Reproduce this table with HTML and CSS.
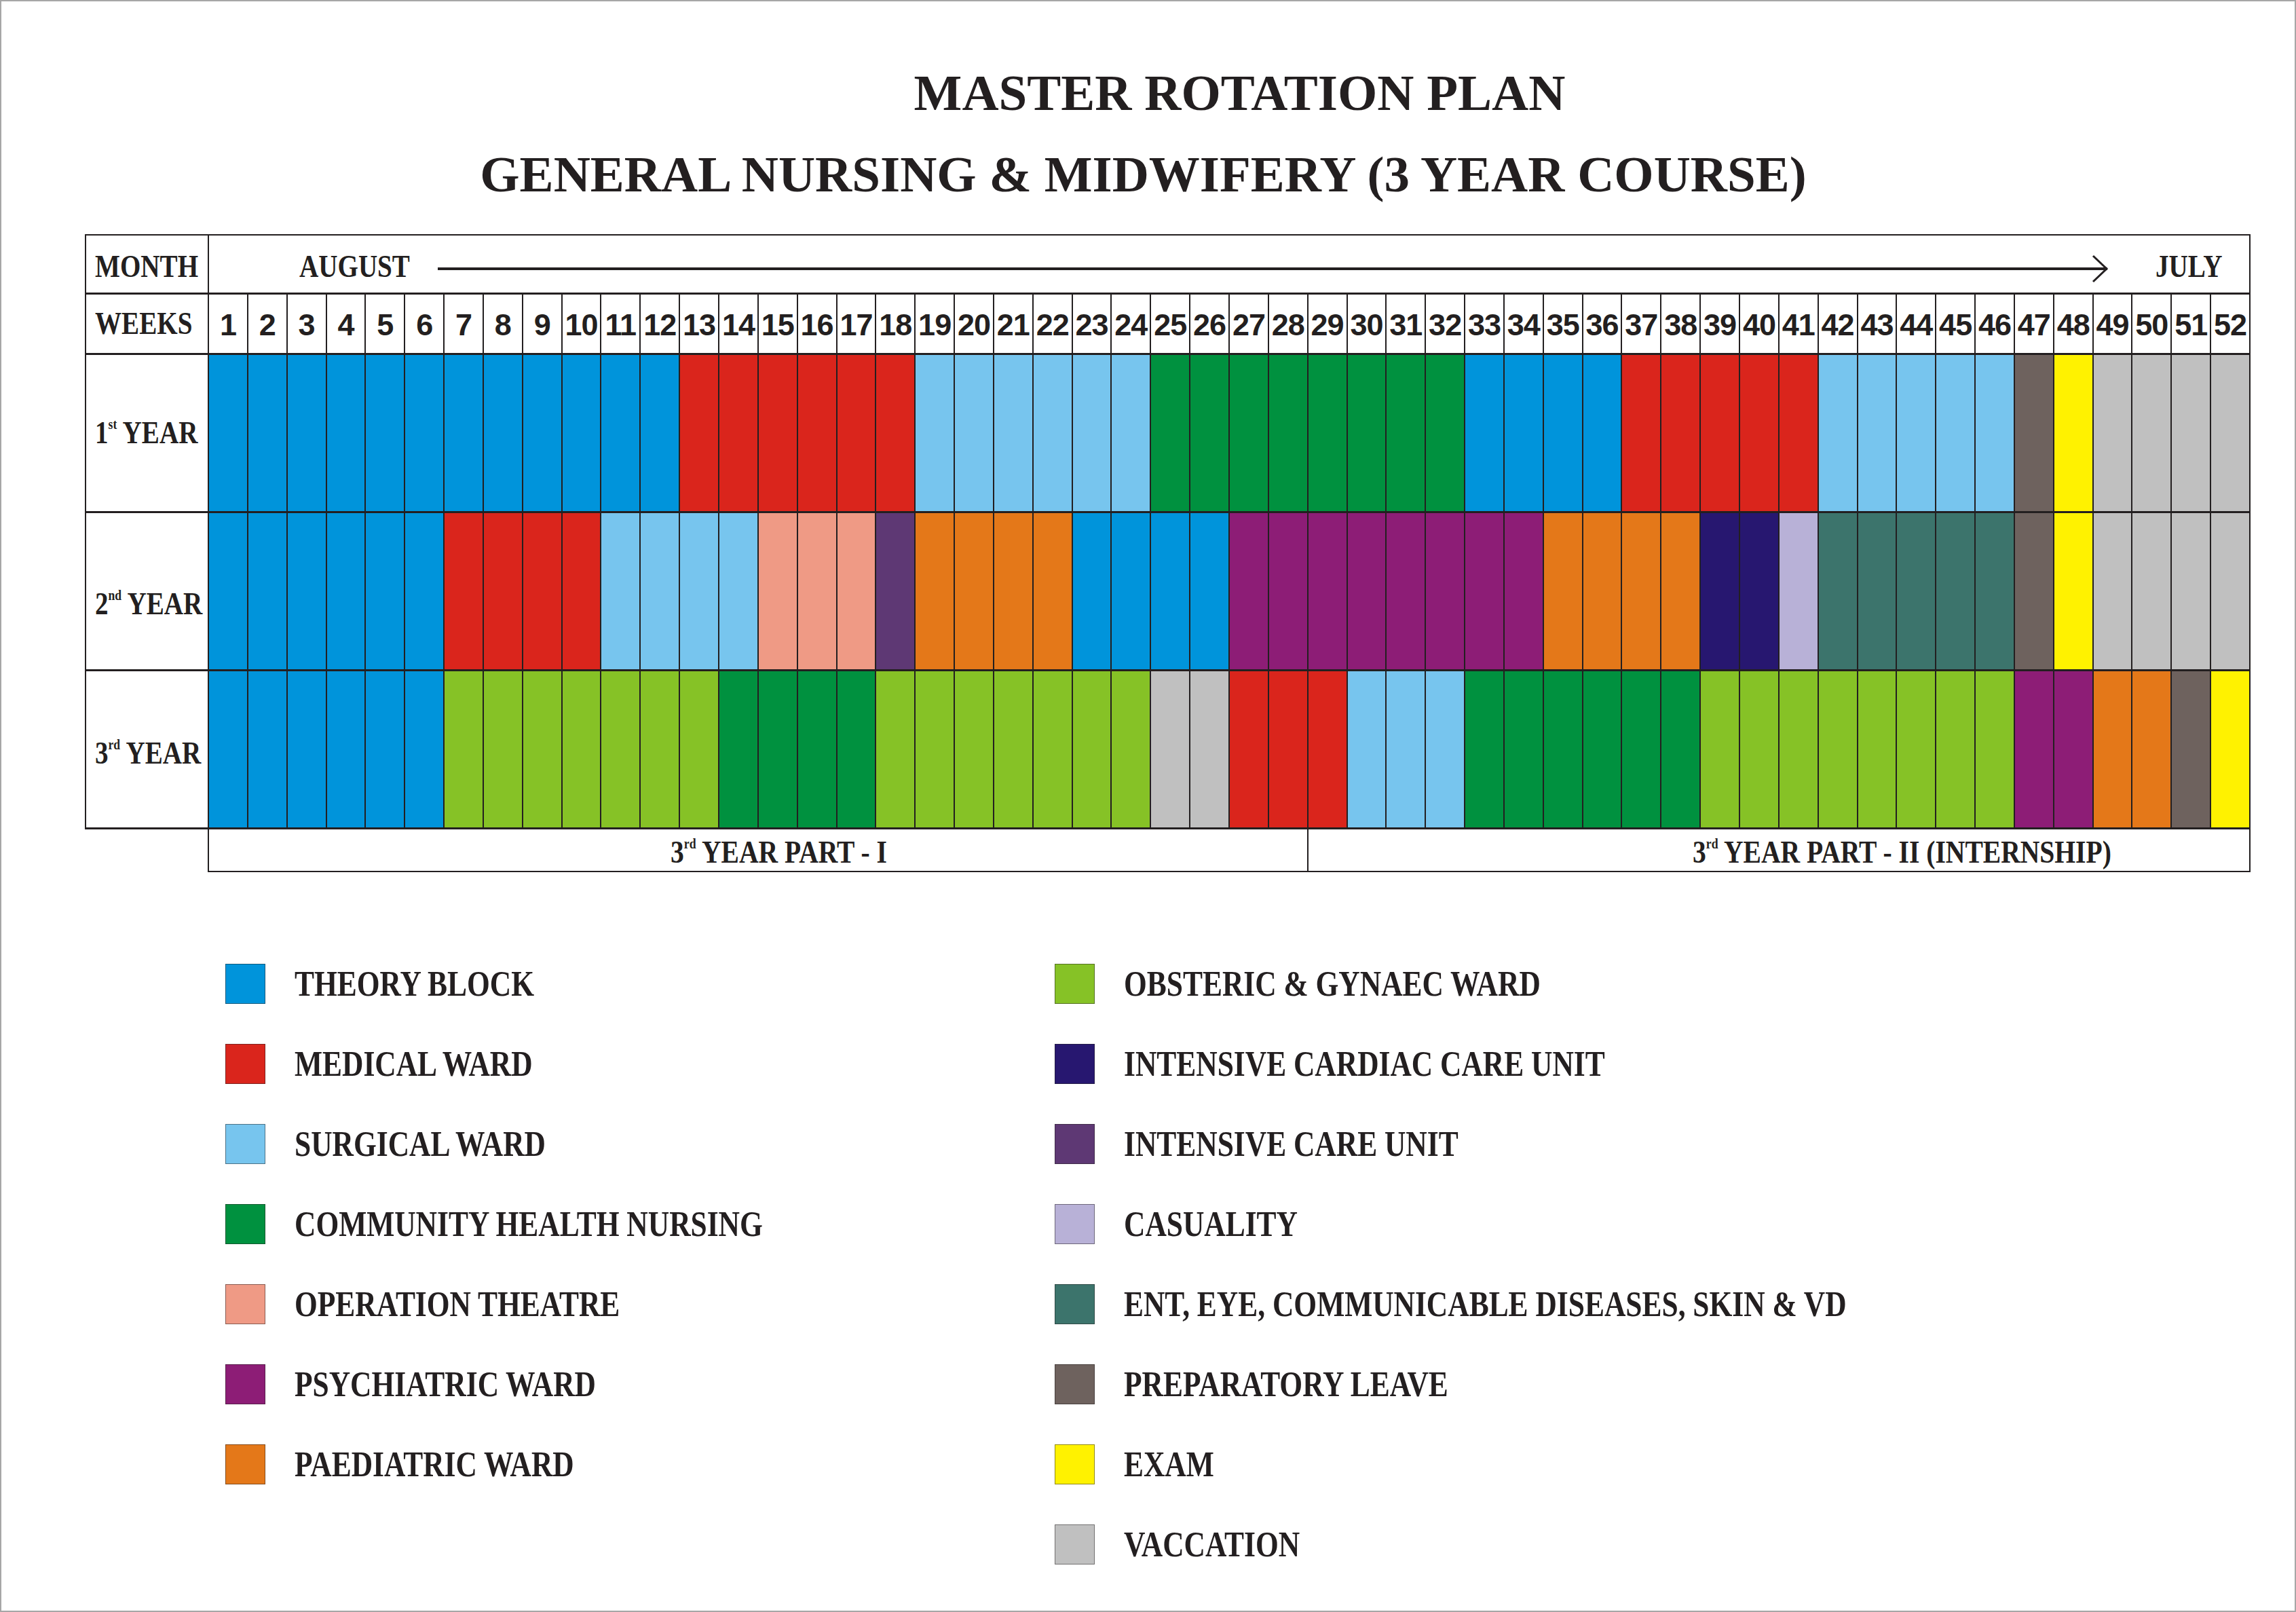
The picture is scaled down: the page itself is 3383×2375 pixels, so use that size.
FILE: index.html
```html
<!DOCTYPE html>
<html lang="en">
<head>
<meta charset="utf-8">
<title>Master Rotation Plan</title>
<link rel="stylesheet" href="styles.css">
</head>
<body>
<div class="page">
  <h1 class="title title-main">MASTER ROTATION PLAN</h1>
  <h2 class="title title-sub">GENERAL NURSING &amp; MIDWIFERY (3 YEAR COURSE)</h2>

  <div class="chart">
    <div class="grid">
      <div class="cell lbl lbl-month"><span class="cond">MONTH</span></div>
      <div class="cell month">
        <span class="cond">AUGUST</span>
        <div class="arrow">
          <div class="arrow-line"></div>
          <svg class="arrow-head" width="26" height="42" viewBox="0 0 26 42"><path d="M3 2 L23 21 L3 40" fill="none" stroke="#231f20" stroke-width="3"/></svg>
        </div>
        <span class="cond">JULY</span>
      </div>

      <div class="cell lbl"><span class="cond">WEEKS</span></div>
      <div class="cell wk">1</div><div class="cell wk">2</div><div class="cell wk">3</div><div class="cell wk">4</div><div class="cell wk">5</div><div class="cell wk">6</div><div class="cell wk">7</div><div class="cell wk">8</div><div class="cell wk">9</div><div class="cell wk">10</div><div class="cell wk">11</div><div class="cell wk">12</div><div class="cell wk">13</div>
      <div class="cell wk">14</div><div class="cell wk">15</div><div class="cell wk">16</div><div class="cell wk">17</div><div class="cell wk">18</div><div class="cell wk">19</div><div class="cell wk">20</div><div class="cell wk">21</div><div class="cell wk">22</div><div class="cell wk">23</div><div class="cell wk">24</div><div class="cell wk">25</div><div class="cell wk">26</div>
      <div class="cell wk">27</div><div class="cell wk">28</div><div class="cell wk">29</div><div class="cell wk">30</div><div class="cell wk">31</div><div class="cell wk">32</div><div class="cell wk">33</div><div class="cell wk">34</div><div class="cell wk">35</div><div class="cell wk">36</div><div class="cell wk">37</div><div class="cell wk">38</div><div class="cell wk">39</div>
      <div class="cell wk">40</div><div class="cell wk">41</div><div class="cell wk">42</div><div class="cell wk">43</div><div class="cell wk">44</div><div class="cell wk">45</div><div class="cell wk">46</div><div class="cell wk">47</div><div class="cell wk">48</div><div class="cell wk">49</div><div class="cell wk">50</div><div class="cell wk">51</div><div class="cell wk">52</div>

      <!-- 1st year -->
      <div class="cell lbl"><span class="cond">1<sup>st</sup> YEAR</span></div>
      <div class="t"></div><div class="t"></div><div class="t"></div><div class="t"></div><div class="t"></div><div class="t"></div><div class="t"></div><div class="t"></div><div class="t"></div><div class="t"></div><div class="t"></div><div class="t"></div>
      <div class="m"></div><div class="m"></div><div class="m"></div><div class="m"></div><div class="m"></div><div class="m"></div>
      <div class="s"></div><div class="s"></div><div class="s"></div><div class="s"></div><div class="s"></div><div class="s"></div>
      <div class="c"></div><div class="c"></div><div class="c"></div><div class="c"></div><div class="c"></div><div class="c"></div><div class="c"></div><div class="c"></div>
      <div class="t"></div><div class="t"></div><div class="t"></div><div class="t"></div>
      <div class="m"></div><div class="m"></div><div class="m"></div><div class="m"></div><div class="m"></div>
      <div class="s"></div><div class="s"></div><div class="s"></div><div class="s"></div><div class="s"></div>
      <div class="l"></div><div class="x"></div>
      <div class="v"></div><div class="v"></div><div class="v"></div><div class="v"></div>

      <!-- 2nd year -->
      <div class="cell lbl lbl-second"><span class="cond">2<sup>nd</sup> YEAR</span></div>
      <div class="t"></div><div class="t"></div><div class="t"></div><div class="t"></div><div class="t"></div><div class="t"></div>
      <div class="m"></div><div class="m"></div><div class="m"></div><div class="m"></div>
      <div class="s"></div><div class="s"></div><div class="s"></div><div class="s"></div>
      <div class="o"></div><div class="o"></div><div class="o"></div>
      <div class="u"></div>
      <div class="d"></div><div class="d"></div><div class="d"></div><div class="d"></div>
      <div class="t"></div><div class="t"></div><div class="t"></div><div class="t"></div>
      <div class="p"></div><div class="p"></div><div class="p"></div><div class="p"></div><div class="p"></div><div class="p"></div><div class="p"></div><div class="p"></div>
      <div class="d"></div><div class="d"></div><div class="d"></div><div class="d"></div>
      <div class="k"></div><div class="k"></div>
      <div class="y"></div>
      <div class="e"></div><div class="e"></div><div class="e"></div><div class="e"></div><div class="e"></div>
      <div class="l"></div><div class="x"></div>
      <div class="v"></div><div class="v"></div><div class="v"></div><div class="v"></div>

      <!-- 3rd year -->
      <div class="cell lbl lbl-third"><span class="cond">3<sup>rd</sup> YEAR</span></div>
      <div class="t"></div><div class="t"></div><div class="t"></div><div class="t"></div><div class="t"></div><div class="t"></div>
      <div class="g"></div><div class="g"></div><div class="g"></div><div class="g"></div><div class="g"></div><div class="g"></div><div class="g"></div>
      <div class="c"></div><div class="c"></div><div class="c"></div><div class="c"></div>
      <div class="g"></div><div class="g"></div><div class="g"></div><div class="g"></div><div class="g"></div><div class="g"></div><div class="g"></div>
      <div class="v"></div><div class="v"></div>
      <div class="m"></div><div class="m"></div><div class="m"></div>
      <div class="s"></div><div class="s"></div><div class="s"></div>
      <div class="c"></div><div class="c"></div><div class="c"></div><div class="c"></div><div class="c"></div><div class="c"></div>
      <div class="g"></div><div class="g"></div><div class="g"></div><div class="g"></div><div class="g"></div><div class="g"></div><div class="g"></div><div class="g"></div>
      <div class="p"></div><div class="p"></div>
      <div class="d"></div><div class="d"></div>
      <div class="l"></div><div class="x"></div>
    </div>

    <div class="parts">
      <div class="part part-one"><span class="cond">3<sup>rd</sup> YEAR PART - I</span></div>
      <div class="part part-two"><span class="cond">3<sup>rd</sup> YEAR PART - II (INTERNSHIP)</span></div>
    </div>
  </div>

  <div class="legend">
    <div class="legend-col legend-left">
      <div class="item"><span class="sw t"></span><span class="cond">THEORY BLOCK</span></div>
      <div class="item"><span class="sw m"></span><span class="cond">MEDICAL WARD</span></div>
      <div class="item"><span class="sw s"></span><span class="cond">SURGICAL WARD</span></div>
      <div class="item"><span class="sw c"></span><span class="cond">COMMUNITY HEALTH NURSING</span></div>
      <div class="item"><span class="sw o"></span><span class="cond">OPERATION THEATRE</span></div>
      <div class="item"><span class="sw p"></span><span class="cond">PSYCHIATRIC WARD</span></div>
      <div class="item"><span class="sw d"></span><span class="cond">PAEDIATRIC WARD</span></div>
    </div>
    <div class="legend-col">
      <div class="item"><span class="sw g"></span><span class="cond">OBSTERIC &amp; GYNAEC WARD</span></div>
      <div class="item"><span class="sw k"></span><span class="cond">INTENSIVE CARDIAC CARE UNIT</span></div>
      <div class="item"><span class="sw u"></span><span class="cond">INTENSIVE CARE UNIT</span></div>
      <div class="item"><span class="sw y"></span><span class="cond">CASUALITY</span></div>
      <div class="item"><span class="sw e"></span><span class="cond">ENT, EYE, COMMUNICABLE DISEASES, SKIN &amp; VD</span></div>
      <div class="item"><span class="sw l"></span><span class="cond">PREPARATORY LEAVE</span></div>
      <div class="item"><span class="sw x"></span><span class="cond">EXAM</span></div>
      <div class="item"><span class="sw v"></span><span class="cond">VACCATION</span></div>
    </div>
  </div>
</div>
</body>
</html>
```

FILE: styles.css
```css
* {
  box-sizing: border-box;
  margin: 0;
  padding: 0;
}

body {
  margin: 0;
  background: #ffffff;
  font-family: "Liberation Serif", "Times New Roman", serif;
  color: #231f20;
}

.page {
  width: 3383px;
  height: 2375px;
  border: 2px solid #a6a6a6;
  padding-top: 98px;
  overflow: hidden;
}

.title {
  font-weight: bold;
  font-size: 75px;
  line-height: 74px;
  text-align: center;
  white-space: nowrap;
}

.title-main {
  padding-left: 270px;
}

.title-sub {
  margin-top: 46px;
  padding-right: 14px;
}

.chart {
  margin: 51px 0 0 123px;
  width: 3191px;
}

.grid {
  display: grid;
  grid-template-columns: 179px repeat(52, 1fr);
  grid-template-rows: 84px 86px 230px 230px 230px;
  gap: 3px 2px;
  padding: 2px 2px 3px;
  background: #231f20;
}

.cell {
  background: #ffffff;
}

.cond {
  display: inline-block;
  white-space: nowrap;
  transform: scaleX(0.85);
  transform-origin: left center;
}

.cond sup {
  font-size: 0.45em;
  vertical-align: 1em;
  line-height: 0;
}

.lbl {
  display: flex;
  align-items: center;
  padding-left: 13px;
  font-weight: bold;
  font-size: 46px;
  line-height: 1;
}

.lbl-month {
  padding-top: 8px;
}

.lbl-second {
  padding-top: 38px;
}

.lbl-third {
  padding-top: 12px;
}

.month {
  grid-column: 2 / -1;
  display: flex;
  align-items: center;
  padding: 8px 22px 0 133px;
  font-weight: bold;
  font-size: 46px;
  line-height: 1;
}

.arrow {
  flex: 1;
  display: flex;
  align-items: center;
  margin: 6px 69px 0 12px;
}

.arrow-line {
  flex: 1;
  height: 4px;
  background: #231f20;
}

.arrow-head {
  display: block;
  margin-left: -24px;
}

.wk {
  display: flex;
  align-items: center;
  justify-content: center;
  font-family: "Liberation Sans", Arial, sans-serif;
  font-weight: bold;
  font-size: 45px;
  line-height: 1;
  letter-spacing: -1px;
  padding-top: 2px;
}

.parts {
  display: flex;
  margin-left: 181px;
  height: 63px;
  border: 2px solid #231f20;
  border-top: 0;
}

.part {
  display: flex;
  align-items: center;
  padding-top: 6px;
  font-weight: bold;
  font-size: 46px;
  line-height: 1;
}

.part .cond {
  transform: scaleX(0.86);
}

.part-one {
  width: 1620px;
  border-right: 2px solid #231f20;
  padding-left: 680px;
}

.part-two {
  flex: 1;
  padding-left: 566px;
}

.legend {
  display: flex;
  margin: 135px 0 0 330px;
}

.legend-col {
  display: flex;
  flex-direction: column;
  gap: 59px;
}

.legend-left {
  width: 1222px;
}

.item {
  display: flex;
  align-items: center;
  gap: 43px;
  height: 59px;
  font-weight: bold;
  font-size: 53px;
  line-height: 59px;
}

.item .cond {
  transform: scaleX(0.82);
}

.sw {
  display: block;
  width: 59px;
  height: 59px;
  flex: none;
  border: 1px solid rgba(35, 31, 32, 0.5);
}

/* rotation colours */
.t { background: #0094db; }
.m { background: #da251c; }
.s { background: #77c5ee; }
.c { background: #00913f; }
.o { background: #ef9a85; }
.p { background: #8d1d76; }
.d { background: #e47819; }
.g { background: #86c226; }
.k { background: #271770; }
.u { background: #5e3874; }
.y { background: #b8b1d7; }
.e { background: #3c746c; }
.l { background: #6e625e; }
.x { background: #fff200; }
.v { background: #c0c0c0; }
```
